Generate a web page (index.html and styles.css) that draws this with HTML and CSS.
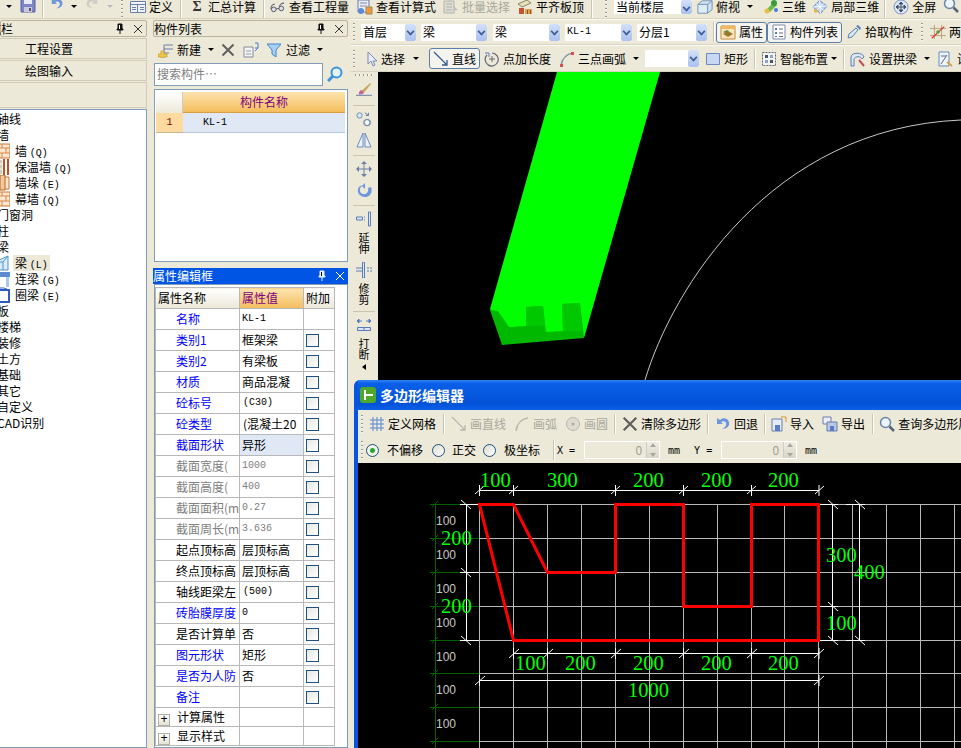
FILE: index.html
```html
<!DOCTYPE html>
<html lang="zh">
<head>
<meta charset="utf-8">
<title>多边形编辑器</title>
<link rel="stylesheet" href="styles.css">
</head>
<body>
<svg class="defs" width="0" height="0">
  <symbol id="i-save" viewBox="0 0 16 16"><path d="M1 1h14v14H1z" fill="#7f86c8" stroke="#5a5fa8"/><path d="M4 1h8v6H4z" fill="#e8ecf8"/><path d="M4 10h8v5H4z" fill="#c8c8d8"/><path d="M9 11h2v3H9z" fill="#556"/></symbol>
  <symbol id="i-undo" viewBox="0 0 16 16"><path d="M2 2v6h6L6 6c3-2 6 0 5 3-.6 2-2 3-4 4 5 0 8-3 7-7-1-4-6-5-9-2z" fill="#6f96dc"/></symbol>
  <symbol id="i-redo" viewBox="0 0 16 16"><path d="M14 2v6H8l2-2c-3-2-6 0-5 3 .6 2 2 3 4 4-5 0-8-3-7-7 1-4 6-5 9-2z" fill="#cfcfc8"/></symbol>
  <symbol id="i-def" viewBox="0 0 16 16"><path d="M.5 2.500h15v11H.5z" fill="#eef2fb" stroke="#6d7fa8"/><path d="M.5 5.500h15M7.500 5v8M10 8.500h4M10 10.500h4M2 8.500h4M2 10.500h4" stroke="#6d7fa8"/></symbol>
  <symbol id="i-glass" viewBox="0 0 17 16"><path d="M1 10c0-3 2-5 4-5M10 8c0-2 2-4 5-4" fill="none" stroke="#667" stroke-width="1.300"/><circle cx="4" cy="10.500" r="2.500" fill="#dde" stroke="#555"/><circle cx="12" cy="9.500" r="2.500" fill="#dde" stroke="#555"/><path d="M6.500 10l3-.5" stroke="#555"/></symbol>
  <symbol id="i-calc" viewBox="0 0 16 16"><path d="M1 1h11v12H1z" fill="#e8eef8" stroke="#6b7ea8"/><path d="M3 4h7M3 7h7" stroke="#88a"/><path d="M9 8h6v7H9z" fill="#e89a3c" stroke="#a85"/><circle cx="4" cy="12" r="3" fill="#5a8ad8"/></symbol>
  <symbol id="i-batch" viewBox="0 0 16 16"><path d="M1 2h10v12H1z" fill="#dcdcd4" stroke="#b4b4aa"/><path d="M3 5h6M3 8h6M3 11h6" stroke="#b4b4aa"/><path d="M10 6l5 5-3 .5L11 15z" fill="#c4c4bc"/></symbol>
  <symbol id="i-slab" viewBox="0 0 16 16"><path d="M1 5l9-4 4 3-9 4z" fill="#e8e0b8" stroke="#886"/><path d="M2 9h5v6H2z" fill="#c8502c"/><path d="M8 10h7v5H8z" fill="#e0a050"/><path d="M10 11h1v4h-1zM13 11h1v4h-1z" fill="#853"/></symbol>
  <symbol id="i-cube" viewBox="0 0 18 16"><path d="M1 5l5-4h11v10l-5 4H1z" fill="#cfe2f2" stroke="#6a8cb0"/><path d="M1 5h11v10M12 5l5-4" fill="none" stroke="#6a8cb0"/><path d="M2 6h9v8H2z" fill="#dcebf6"/></symbol>
  <symbol id="i-3d" viewBox="0 0 16 16"><path d="M4 10l7-7 3 3-7 7z" fill="#6cbc4c"/><circle cx="11" cy="4" r="3" fill="#3c9c3c"/><circle cx="4" cy="12" r="2.500" fill="#e8c040"/><circle cx="13" cy="11" r="2" fill="#4c7cd8"/></symbol>
  <symbol id="i-part" viewBox="0 0 17 16"><path d="M8 1l8 6-7 8-8-7z" fill="#b4ccf0" stroke="#6a8cc0"/><path d="M4.500 4.500l8 7M12 4l-7 7.500M8 1l1 14M1 8l15-1" stroke="#fff"/><circle cx="4" cy="12" r="2" fill="#e8b040"/></symbol>
  <symbol id="i-full" viewBox="0 0 16 16"><circle cx="8" cy="8" r="7" fill="#dbe6f6" stroke="#7c94c0"/><path d="M8 3v10M3 8h10M8 3l-2 2h4zM8 13l-2-2h4zM3 8l2-2v4zM13 8l-2-2v4z" fill="#345" stroke="#456"/></symbol>
  <symbol id="i-mag" viewBox="0 0 16 16"><circle cx="6.500" cy="6.500" r="5" fill="#eef4fc" stroke="#6b86a8" stroke-width="1.500"/><path d="M10.500 10.500L15 15" stroke="#567" stroke-width="2.500"/></symbol>
  <symbol id="i-prop" viewBox="0 0 16 16"><path d="M1 2h14v13H1z" fill="#fbe6c0" stroke="#c88c30"/><path d="M1 2h14v3H1z" fill="#f0b860"/><path d="M3 10l5-3 5 3-5 3z" fill="#9a7a28"/><path d="M3 8l4-2 2 1-4 2z" fill="#5e8a3c"/></symbol>
  <symbol id="i-list" viewBox="0 0 16 16"><path d="M2 1h12v14H2z" fill="#fff" stroke="#7c8cac"/><path d="M4 4h2v2H4zM4 8h2v2H4zM4 12h2v1H4z" fill="#4c7cd0"/><path d="M8 5h4M8 9h4M8 12.500h4" stroke="#667"/></symbol>
  <symbol id="i-pick" viewBox="0 0 16 16"><path d="M2 14l1-4 7-6 2 2-6 7z" fill="#d8e8f8" stroke="#5c7cb0"/><path d="M10 2l4 4 1-2-3-3z" fill="#5a7cc0"/></symbol>
  <symbol id="i-two" viewBox="0 0 18 16"><path d="M5 0v16M13 0v16M0 4h18M0 12h18" stroke="#b89c6c"/><path d="M2 15L16 2" stroke="#d83030" stroke-width="1.300"/><circle cx="9" cy="8" r="2" fill="#5aa03c"/></symbol>
  <symbol id="i-sel" viewBox="0 0 12 16"><path d="M2 1v12l3-3 2 5 2-1-2-4h4z" fill="#e8ecf8" stroke="#7c8cb0"/></symbol>
  <symbol id="i-line" viewBox="0 0 16 16"><path d="M1 1l13 13M9 14h5V9" fill="none" stroke="#345c94" stroke-width="1.300"/></symbol>
  <symbol id="i-len" viewBox="0 0 16 16"><path d="M3 4a6.500 6.500 0 1 0 5-2" fill="none" stroke="#667" stroke-width="1.200"/><path d="M5 8h6M8 5v6" stroke="#667"/><path d="M1 2h4v4" fill="none" stroke="#5a7cc0"/></symbol>
  <symbol id="i-arc" viewBox="0 0 16 16"><path d="M2 15C3 8 7 3 14 2" fill="none" stroke="#8c94a8" stroke-width="1.500"/><path d="M1 13h3v3H1zM12 1h3v3h-3z" fill="#d85050"/></symbol>
  <symbol id="i-rect" viewBox="0 0 16 16"><path d="M1.500 2.500h13v11h-13z" fill="#c8d8f2" stroke="#6a8cc0"/></symbol>
  <symbol id="i-smart" viewBox="0 0 16 16"><path d="M1.500 1.500h13v13h-13z" fill="#f4f4ee" stroke="#667" stroke-dasharray="2 1"/><path d="M4 4h3v3H4zM9 9h3v3H9z" fill="#456"/><path d="M9 4h3v3H9zM4 9h3v3H4z" fill="#8ca4cc"/></symbol>
  <symbol id="i-arch" viewBox="0 0 16 16"><path d="M1 6C1 1 13 1 14 6l-2 2c-1-3-7-3-8 0v7H1z" fill="#dfe8f6" stroke="#5c7ca8"/><path d="M9 9l5 6" stroke="#c05050" stroke-width="2"/></symbol>
  <symbol id="i-set" viewBox="0 0 16 16"><path d="M1 1h10v14H1z" fill="#eef4fc" stroke="#5c8cc8"/><path d="M3 13L9 4M3 5h5" stroke="#668"/><path d="M9 11l5 4" stroke="#d8a040" stroke-width="2"/></symbol>
  <symbol id="i-pin" viewBox="0 0 10 12"><path d="M3 1h4v5h1v1H2V6h1zM5 7v4" fill="#111" stroke="#111"/><path d="M4 2h1v4H4z" fill="#fff"/></symbol>
  <symbol id="i-close" viewBox="0 0 10 10"><path d="M1 1l8 8M9 1L1 9" stroke="currentColor" fill="none"/></symbol>
  <symbol id="i-new" viewBox="0 0 16 16"><path d="M6 3h9M6 7h9M6 11h5M6 3v8" stroke="#6a7ca8" fill="none"/><path d="M3 9h3v3h3v3H6v1H3v-1H0v-3h3z" fill="#f0c848" stroke="#b89030" stroke-width=".6"/></symbol>
  <symbol id="i-x" viewBox="0 0 14 14"><path d="M1.500 1.500l11 11M12.500 1.500l-11 11" stroke="#606060" stroke-width="2"/></symbol>
  <symbol id="i-copy" viewBox="0 0 16 16"><path d="M1 5h9v10H1z" fill="#f4f4f4" stroke="#889"/><path d="M3 9h5M3 12h5" stroke="#99a"/><path d="M12 1h3v5h-3M12 9l3-3" fill="none" stroke="#4c7cd0"/></symbol>
  <symbol id="i-filter" viewBox="0 0 14 14"><path d="M0 1h14L9 7v7L5 11V7z" fill="#a8d0f4" stroke="#3c86cc"/></symbol>
  <symbol id="i-search" viewBox="0 0 16 16"><circle cx="9.500" cy="6.500" r="5" fill="#e4f2fc" stroke="#3c94dc" stroke-width="2"/><path d="M6 10l-5 5" stroke="#3c94dc" stroke-width="3"/></symbol>
  <symbol id="i-wall" viewBox="0 0 16 16"><path d="M0 1h16v14H0z" fill="#fbe6d0" stroke="#c87838"/><path d="M0 5h16M0 10h16M8 1v4M4 5v5M12 5v5M8 10v5" stroke="#d88848"/></symbol>
  <symbol id="i-warm" viewBox="0 0 16 16"><path d="M0 1h8v14H0z" fill="#ddc8b8"/><path d="M0 5h8M0 10h8" stroke="#fff"/><path d="M9 0h2v16H9zM13 0h2v16h-2z" fill="#c05020"/></symbol>
  <symbol id="i-pier" viewBox="0 0 16 16"><path d="M1 2h14v12H1z" fill="#fbe6d0" stroke="#c87838"/><path d="M6 0h5v15H6z" fill="#f4c898" stroke="#b86828"/></symbol>
  <symbol id="i-beam" viewBox="0 0 16 16"><path d="M1 7l13-6v14H1z" fill="#d8ecfa" stroke="#4c94d0"/><path d="M1 7h8v8M9 7l5-6" fill="none" stroke="#4c94d0"/></symbol>
  <symbol id="i-link" viewBox="0 0 16 16"><path d="M0 1h16v5H0z" fill="#5c8cd0"/><path d="M3 6h3v10H3zM12 6h3v10h-3z" fill="#a8c8ec"/></symbol>
  <symbol id="i-ring" viewBox="0 0 16 16"><path d="M1 3h14v12H1z" fill="#fff" stroke="#2c5cc0" stroke-width="2"/><path d="M15 3l-5-2H0" fill="none" stroke="#2c5cc0"/></symbol>
  <symbol id="i-brush" viewBox="0 0 18 16"><path d="M0 14h18" stroke="#5a74a8"/><path d="M6 9L16 0l1 1-8 10z" fill="#c8a860"/><path d="M3 13c0-3 2-5 3-5l3 3c-1 2-3 2-6 2z" fill="#c06898"/></symbol>
  <symbol id="i-offset" viewBox="0 0 18 16"><circle cx="4" cy="4" r="3" fill="#dbe6f6" stroke="#6a84b0"/><circle cx="12" cy="12" r="3.500" fill="#fff" stroke="#6a84b0"/><circle cx="13" cy="12" r="3.500" fill="none" stroke="#6a84b0"/><path d="M10 1l4 3m0-3v3h-3" fill="none" stroke="#5a74a8"/></symbol>
  <symbol id="i-mirror" viewBox="0 0 16 16"><path d="M9 15V1l6 14zM7 15V1L1 15z" fill="#eef3fb" stroke="#6a8cc4"/></symbol>
  <symbol id="i-move" viewBox="0 0 16 16"><path d="M8 1v14M1 8h14" stroke="#6a7ea8"/><path d="M8 0l3 3H5zM8 16l3-3H5zM0 8l3-3v6zM16 8l-3-3v6z" fill="#6a7ea8"/></symbol>
  <symbol id="i-rot" viewBox="0 0 14 16"><path d="M8 1v6l-3-3C2 6 2 11 6 12c4 1 6-3 5-6l3-1c2 5-1 10-6 10C2 15-1 9 2 5c1-1 3-2 4-2z" fill="#6f96dc"/></symbol>
  <symbol id="i-ext" viewBox="0 0 16 16"><path d="M12.500 1v14h2V1zM.5 6h6v3h-6z" fill="#dce6f6" stroke="#5a7cb8"/><path d="M8 6h2M8 9h2" stroke="#5a7cb8" stroke-dasharray="1 1"/></symbol>
  <symbol id="i-trim" viewBox="0 0 16 16"><path d="M0 6h6M0 9h6" stroke="#5a7cb8"/><path d="M6.500 0h2v16h-2z" fill="#dce6f6" stroke="#5a7cb8"/><path d="M11 6h5M11 9h5" stroke="#5a7cb8" stroke-dasharray="2 1"/></symbol>
  <symbol id="i-break" viewBox="0 0 16 14"><path d="M1 3h5M10 3h5M1 3l2-2v4zM15 3l-2-2v4z" fill="#5a7cb8" stroke="#5a7cb8"/><path d="M1.500 9.500h13v3h-13zM8 9v4" fill="#dce6f6" stroke="#5a7cb8"/></symbol>
  <symbol id="i-app" viewBox="0 0 16 16"><path d="M0 3a3 3 0 0 1 3-3h10a3 3 0 0 1 3 3v10a3 3 0 0 1-3 3H3a3 3 0 0 1-3-3z" fill="#4ea82c"/><path d="M4 3h2v10H4zM6 7h7v2H6z" fill="#fff"/></symbol>
  <symbol id="i-grid" viewBox="0 0 16 16"><path d="M1 4h14M1 8h14M1 12h14M4 1v14M8 1v14M12 1v14" stroke="#5a84d0"/></symbol>
  <symbol id="i-gline" viewBox="0 0 16 16"><path d="M1 1l13 13M9 14h5V9" fill="none" stroke="#b8b8ae" stroke-width="1.300"/></symbol>
  <symbol id="i-garc" viewBox="0 0 16 16"><path d="M2 15C3 8 7 3 14 2" fill="none" stroke="#b8b8ae" stroke-width="1.500"/></symbol>
  <symbol id="i-gcirc" viewBox="0 0 16 16"><circle cx="8" cy="8" r="6.500" fill="#dedcd0" stroke="#b8b8ae"/><circle cx="8" cy="8" r="1.500" fill="#aaa"/></symbol>
  <symbol id="i-imp" viewBox="0 0 16 16"><path d="M1 3h10v12H1z" fill="#e4ecf8" stroke="#6a7ca8"/><path d="M4 9h5v6H4z" fill="#5a7cc8"/><path d="M10 1h5v5" fill="none" stroke="#d89030"/></symbol>
  <symbol id="i-exp" viewBox="0 0 16 16"><path d="M1 1h8v7H1z" fill="#eef" stroke="#6a7ca8"/><path d="M5 6h10v9H5z" fill="#b8c8e4" stroke="#6a7ca8"/><path d="M8 10h4v5H8z" fill="#5a7cc8"/></symbol>
</svg>

<div class="app">
  <header class="bar bar-top">
    <i class="caret"></i>
    <svg class="ic m8"><use href="#i-save"/></svg>
    <i class="sep m6"></i>
    <svg class="ic ic14 m6"><use href="#i-undo"/></svg>
    <i class="caret m7"></i>
    <svg class="ic ic14 m8"><use href="#i-redo"/></svg>
    <i class="caret faint m8"></i>
    <i class="grip m8"></i>
    <span class="tool m7"><svg class="ic"><use href="#i-def"/></svg>定义</span>
    <i class="sep m7"></i>
    <span class="tool m7"><b class="sigma">Σ</b>汇总计算</span>
    <i class="sep m7"></i>
    <span class="tool m5"><svg class="ic"><use href="#i-glass"/></svg>查看工程量</span>
    <span class="tool m8"><svg class="ic"><use href="#i-calc"/></svg>查看计算式</span>
    <span class="tool off m7"><svg class="ic"><use href="#i-batch"/></svg>批量选择</span>
    <span class="tool m7"><svg class="ic"><use href="#i-slab"/></svg>平齐板顶</span>
    <i class="sep m7"></i>
    <i class="grip m12"></i>
    <span class="combo w78 m7"><span class="combo-text">当前楼层</span><span class="combo-btn"></span></span>
    <span class="tool m5"><svg class="ic"><use href="#i-cube"/></svg>俯视</span>
    <i class="caret m7"></i>
    <span class="tool m10"><svg class="ic"><use href="#i-3d"/></svg>三维</span>
    <span class="tool m6"><svg class="ic"><use href="#i-part"/></svg>局部三维</span>
    <i class="sep m5"></i>
    <span class="tool m7"><svg class="ic"><use href="#i-full"/></svg>全屏</span>
    <svg class="ic m7"><use href="#i-mag"/></svg>
  </header>

  <div class="main">
    <aside class="nav">
      <div class="pane-title"><span class="pane-name clip-left">导航栏</span><svg class="pin"><use href="#i-pin"/></svg><svg class="close"><use href="#i-close"/></svg></div>
      <div class="nav-btn">工程设置</div>
      <div class="nav-btn">绘图输入</div>
      <div class="nav-btn tall"></div>
      <ul class="tree">
        <li>轴线</li>
        <li>墙</li>
        <li class="child"><svg class="ic"><use href="#i-wall"/></svg><span>墙 <em>(Q)</em></span></li>
        <li class="child"><svg class="ic"><use href="#i-warm"/></svg><span>保温墙 <em>(Q)</em></span></li>
        <li class="child"><svg class="ic"><use href="#i-pier"/></svg><span>墙垛 <em>(E)</em></span></li>
        <li class="child"><svg class="ic"><use href="#i-wall"/></svg><span>幕墙 <em>(Q)</em></span></li>
        <li>门窗洞</li>
        <li>柱</li>
        <li>梁</li>
        <li class="child"><svg class="ic"><use href="#i-beam"/></svg><span class="picked">梁 <em>(L)</em></span></li>
        <li class="child"><svg class="ic"><use href="#i-link"/></svg><span>连梁 <em>(G)</em></span></li>
        <li class="child"><svg class="ic"><use href="#i-ring"/></svg><span>圈梁 <em>(E)</em></span></li>
        <li>板</li>
        <li>楼梯</li>
        <li>装修</li>
        <li>土方</li>
        <li>基础</li>
        <li>其它</li>
        <li>自定义</li>
        <li>CAD识别</li>
      </ul>
    </aside>

    <section class="mid">
      <div class="list-pane">
        <div class="pane-title"><span class="pane-name">构件列表</span><svg class="pin"><use href="#i-pin"/></svg><svg class="close"><use href="#i-close"/></svg></div>
        <div class="list-tools">
          <span class="tool m5"><svg class="ic"><use href="#i-new"/></svg>新建</span>
          <i class="caret m7"></i>
          <svg class="ic ic14 m7"><use href="#i-x"/></svg>
          <svg class="ic m8"><use href="#i-copy"/></svg>
          <span class="tool m8"><svg class="ic ic14"><use href="#i-filter"/></svg><span class="m2">过滤</span></span>
          <i class="caret m7"></i>
        </div>
        <div class="search">
          <div class="search-box">搜索构件…</div>
          <svg class="ic"><use href="#i-search"/></svg>
        </div>
        <div class="list-table">
          <div class="lt-head"><span class="lt-corner"></span><span class="lt-col">构件名称</span></div>
          <div class="lt-row"><span class="lt-num">1</span><span class="lt-cell la">KL-1</span></div>
        </div>
      </div>

      <div class="prop-title"><span class="pane-name">属性编辑框</span><svg class="pin inv"><use href="#i-pin"/></svg><svg class="close"><use href="#i-close"/></svg></div>
      <div class="prop-wrap">
        <table class="props">
          <colgroup><col class="c1"><col class="c2"><col class="c3"></colgroup>
          <thead><tr><th>属性名称</th><th class="hot">属性值</th><th>附加</th></tr></thead>
          <tbody>
            <tr class="blue"><td class="k">名称</td><td class="la">KL-1</td><td></td></tr>
            <tr class="blue"><td class="k">类别1</td><td>框架梁</td><td><i class="chk"></i></td></tr>
            <tr class="blue"><td class="k">类别2</td><td>有梁板</td><td><i class="chk"></i></td></tr>
            <tr class="blue"><td class="k">材质</td><td>商品混凝</td><td><i class="chk"></i></td></tr>
            <tr class="blue"><td class="k">砼标号</td><td class="la pad">(C30)</td><td><i class="chk"></i></td></tr>
            <tr class="blue"><td class="k">砼类型</td><td class="pad">(混凝土20</td><td><i class="chk"></i></td></tr>
            <tr class="blue"><td class="k">截面形状</td><td class="cur">异形</td><td><i class="chk"></i></td></tr>
            <tr class="grey"><td class="k">截面宽度(</td><td class="la">1000</td><td><i class="chk"></i></td></tr>
            <tr class="grey"><td class="k">截面高度(</td><td class="la">400</td><td><i class="chk"></i></td></tr>
            <tr class="grey"><td class="k">截面面积(m</td><td class="la">0.27</td><td><i class="chk"></i></td></tr>
            <tr class="grey"><td class="k">截面周长(m</td><td class="la">3.636</td><td><i class="chk"></i></td></tr>
            <tr><td class="k">起点顶标高</td><td>层顶标高</td><td><i class="chk"></i></td></tr>
            <tr><td class="k">终点顶标高</td><td>层顶标高</td><td><i class="chk"></i></td></tr>
            <tr><td class="k">轴线距梁左</td><td class="la pad">(500)</td><td><i class="chk"></i></td></tr>
            <tr class="blue"><td class="k">砖胎膜厚度</td><td class="la">0</td><td><i class="chk"></i></td></tr>
            <tr><td class="k">是否计算单</td><td>否</td><td><i class="chk"></i></td></tr>
            <tr class="blue"><td class="k">图元形状</td><td>矩形</td><td><i class="chk"></i></td></tr>
            <tr class="blue"><td class="k">是否为人防</td><td>否</td><td><i class="chk"></i></td></tr>
            <tr class="blue"><td class="k">备注</td><td></td><td><i class="chk"></i></td></tr>
            <tr class="group"><td><span class="plus">+</span>计算属性</td><td></td><td></td></tr>
            <tr class="group"><td><span class="plus">+</span>显示样式</td><td></td><td></td></tr>
          </tbody>
        </table>
      </div>
    </section>

    <section class="work">
      <div class="bar bar-mid">
        <i class="grip m3"></i>
        <span class="combo w55 m6"><span class="combo-text">首层</span><span class="combo-btn"></span></span>
        <span class="combo w66 m5"><span class="combo-text">梁</span><span class="combo-btn"></span></span>
        <span class="combo w67 m6"><span class="combo-text">梁</span><span class="combo-btn"></span></span>
        <span class="combo w67 m5"><span class="combo-text la">KL-1</span><span class="combo-btn"></span></span>
        <span class="combo w70 m5"><span class="combo-text">分层1</span><span class="combo-btn"></span></span>
        <i class="sep m6"></i>
        <span class="tool toggled w51 m1"><svg class="ic"><use href="#i-prop"/></svg>属性</span>
        <span class="tool toggled w75"><svg class="ic"><use href="#i-list"/></svg>构件列表</span>
        <span class="tool m4"><svg class="ic"><use href="#i-pick"/></svg>拾取构件</span>
        <i class="grip m8"></i>
        <span class="tool m7"><svg class="ic"><use href="#i-two"/></svg>两点</span>
      </div>
      <div class="bar bar-low">
        <i class="grip m3"></i>
        <span class="tool m11"><svg class="ic ic12"><use href="#i-sel"/></svg>选择</span>
        <i class="caret m8"></i>
        <span class="tool toggled w51 m10"><svg class="ic"><use href="#i-line"/></svg>直线</span>
        <span class="tool m4"><svg class="ic"><use href="#i-len"/></svg>点加长度</span>
        <span class="tool m8"><svg class="ic"><use href="#i-arc"/></svg>三点画弧</span>
        <i class="caret m7"></i>
        <span class="combo w54 m6"><span class="combo-text"></span><span class="combo-btn"></span></span>
        <span class="tool m6"><svg class="ic"><use href="#i-rect"/></svg>矩形</span>
        <i class="sep m6"></i>
        <span class="tool m5"><svg class="ic"><use href="#i-smart"/></svg>智能布置</span>
        <i class="caret m3"></i>
        <i class="sep m6"></i>
        <span class="tool m5"><svg class="ic"><use href="#i-arch"/></svg>设置拱梁</span>
        <i class="caret m7"></i>
        <span class="tool m8"><svg class="ic"><use href="#i-set"/></svg>设置</span>
      </div>
      <div class="stage">
        <nav class="vbar">
          <i class="vgrip"></i>
          <svg class="vic"><use href="#i-brush"/></svg>
          <i class="vsep"></i>
          <svg class="vic"><use href="#i-offset"/></svg>
          <svg class="vic"><use href="#i-mirror"/></svg>
          <i class="vsep"></i>
          <svg class="vic"><use href="#i-move"/></svg>
          <svg class="vic"><use href="#i-rot"/></svg>
          <i class="vsep"></i>
          <svg class="vic"><use href="#i-ext"/></svg>
          <span class="vtext">延<br>伸</span>
          <svg class="vic"><use href="#i-trim"/></svg>
          <span class="vtext tight">修<br>剪</span>
          <i class="vsep"></i>
          <svg class="vic"><use href="#i-break"/></svg>
          <span class="vtext tight">打<br>断</span>
          <i class="vcaret"></i>
        </nav>
        <svg class="scene" viewBox="378 72 583 676">
          <path d="M645 380C672 290 770 128 961 120" fill="none" stroke="#c8c8c8"/>
          <path d="M557 72H660L584 338L510 335L490 309Z" fill="#00ff00"/>
          <path d="M490 310L498 311L509 327L526 326L526 307L543 306L546 332L563 331L562 304L580 303L584 338L513 344L502 345Z" fill="#00b800"/>
          <path d="M526 307L543 306L545 326L526 326ZM562 304L580 303L582 331L563 331Z" fill="#00c800"/>
        </svg>
      </div>
    </section>
  </div>

  <div class="dialog">
    <div class="dlg-title"><svg class="ic"><use href="#i-app"/></svg>多边形编辑器</div>
    <div class="bar dlg-tools">
      <i class="grip m3"></i>
      <span class="tool m6"><svg class="ic"><use href="#i-grid"/></svg>定义网格</span>
      <i class="sep m7"></i>
      <span class="tool off m6"><svg class="ic"><use href="#i-gline"/></svg>画直线</span>
      <span class="tool off m8"><svg class="ic"><use href="#i-garc"/></svg>画弧</span>
      <span class="tool off m8"><svg class="ic"><use href="#i-gcirc"/></svg>画圆</span>
      <i class="sep m6"></i>
      <span class="tool m6"><svg class="ic"><use href="#i-x"/></svg>清除多边形</span>
      <i class="sep m6"></i>
      <span class="tool m6"><svg class="ic"><use href="#i-undo"/></svg>回退</span>
      <i class="sep m6"></i>
      <span class="tool m5"><svg class="ic"><use href="#i-imp"/></svg>导入</span>
      <span class="tool m8"><svg class="ic"><use href="#i-exp"/></svg>导出</span>
      <i class="sep m7"></i>
      <span class="tool m5"><svg class="ic"><use href="#i-mag"/></svg>查询多边形属性</span>
    </div>
    <div class="bar dlg-opts">
      <i class="grip m3"></i>
      <i class="radio on m3"></i><span class="m8">不偏移</span>
      <i class="radio m9"></i><span class="m7">正交</span>
      <i class="radio m7"></i><span class="m8">极坐标</span>
      <i class="sep m13"></i>
      <span class="coord m2">X =</span>
      <span class="spin m9"><span class="spin-val">0</span><span class="spin-btn"></span></span>
      <span class="unit m8">mm</span>
      <span class="coord m14">Y =</span>
      <span class="spin m9"><span class="spin-val">0</span><span class="spin-btn"></span></span>
      <span class="unit m8">mm</span>
    </div>
    <svg class="cad" viewBox="358 463 603 285">
      <path class="gridline" d="M479 504.500H961M479 538.500H961M479 572.500H961M479 606.500H961M479 640.500H961M479 673.500H961M479 707.500H961M479 741.500H961M479.500 504V748M513.500 504V748M547.500 504V748M581.500 504V748M615.500 504V748M649.500 504V748M683.500 504V748M717.500 504V748M751.500 504V748M784.500 504V748M818.500 504V748M852.500 504V748M886.500 504V748M920.500 504V748M954.500 504V748"/>
      <path class="axis" d="M430 504.500H479M430 538.500H479M430 572.500H479M430 606.500H479M430 640.500H479M430 673.500H479M430 707.500H479M430 741.500H479M435.500 504V748M432 507l6-6M432 541l6-6M432 575l6-6M432 609l6-6M432 643l6-6M432 676l6-6M432 710l6-6M432 744l6-6"/>
      <g class="small">
        <text x="436" y="525">100</text><text x="436" y="559">100</text><text x="436" y="593">100</text><text x="436" y="627">100</text><text x="436" y="661">100</text><text x="436" y="694">100</text><text x="436" y="728">100</text>
      </g>
      <path class="dim" d="M479.500 490.500H819M479.500 485V496M513.500 485V496M615.500 485V496M683.500 485V496M751.500 485V496M819 485V496M475 494l9-8M509 494l9-8M611 494l9-8M679 494l9-8M747 494l9-8M815 494l9-8"/>
      <path class="dim" d="M466.500 504V640M460 504.500H479M460 572.500H479M460 640.500H479M461 500l10 9M461 568l10 9M461 636l10 9"/>
      <path class="dim" d="M832.500 504V640M859.500 504V640M820 504.500H838M846 504.500H865M820 606.500H838M820 640.500H838M846 640.500H865M828 500l10 9M855 500l10 9M828 602l10 9M828 636l10 9M855 636l10 9"/>
      <path class="dim" d="M513.500 653.500H819M513.500 648V659M547.500 648V659M615.500 648V659M683.500 648V659M751.500 648V659M819 648V659M509 658l10-9M543 658l10-9M611 658l10-9M679 658l10-9M747 658l10-9M814 658l10-9"/>
      <path class="dim" d="M479.500 680.500H819M479.500 675V686M819 675V686M475 685l10-9M814 685l10-9"/>
      <path class="poly" d="M479.500 504.500H513.500L547.500 572.500H615.500V504.500H683.500V606.500H751.500V504.500H818.500V640.500H513.500Z"/>
      <g class="big">
        <text x="480" y="487">100</text><text x="547" y="487">300</text><text x="633" y="487">200</text><text x="701" y="487">200</text><text x="768" y="487">200</text>
        <text x="441" y="545">200</text><text x="441" y="613">200</text>
        <text x="826" y="562">300</text><text x="854" y="579">400</text><text x="826" y="630">100</text>
        <text x="515" y="670">100</text><text x="565" y="670">200</text><text x="633" y="670">200</text><text x="701" y="670">200</text><text x="768" y="670">200</text>
        <text x="628" y="697">1000</text>
      </g>
    </svg>
  </div>
</div>
</body>
</html>
```
FILE: styles.css
```css
* { box-sizing: border-box; }
html, body { margin: 0; height: 100%; }
body { background: #ece9d8; overflow: hidden; font: 12px/16px "Noto Sans CJK SC", "Liberation Sans", sans-serif; color: #000; }
.defs { position: absolute; }
.app { position: relative; width: 961px; height: 748px; overflow: hidden; display: flex; flex-direction: column; }

.m1 { margin-left: 1px; } .m2 { margin-left: 2px; } .m3 { margin-left: 3px; } .m4 { margin-left: 4px; }
.m5 { margin-left: 5px; } .m6 { margin-left: 6px; } .m7 { margin-left: 7px; } .m8 { margin-left: 8px; }
.m9 { margin-left: 9px; } .m10 { margin-left: 10px; } .m11 { margin-left: 11px; } .m12 { margin-left: 12px; }
.m13 { margin-left: 13px; } .m14 { margin-left: 14px; }

.bar { display: flex; align-items: center; flex: none; background: #ece9d8; white-space: nowrap; }
.bar-top { height: 19px; padding-left: 6px; align-items: flex-start; border-bottom: 1px solid #d8d4c0; }
.bar-top .caret { margin-top: 5px; }
.bar-top .ic { margin-top: -3px; }
.bar-top .tool { line-height: 13px; height: 13px; }
.bar-top .tool .ic { margin-top: 0; }
.bar-top .combo { height: 14px; }
.bar-top .combo-text { line-height: 13px; }
.bar-top .sep { height: 18px; }
.bar-mid { height: 26px; border-top: 1px solid #fbfaf4; border-bottom: 1px solid #d8d4c0; }
.bar-low { height: 27px; border-top: 1px solid #fbfaf4; border-bottom: 1px solid #d8d4c0; }

.ic { width: 16px; height: 16px; flex: none; display: block; }
.ic14 { width: 14px; height: 14px; }
.ic12 { width: 12px; }
.tool { display: inline-flex; align-items: center; gap: 3px; flex: none; height: 18px; }
.off { color: #a8a89c; }
.sigma { width: 16px; text-align: center; font: 700 14px/14px "Liberation Serif", serif; color: #333; }
.sep { flex: none; width: 2px; height: 20px; border-left: 1px solid #c8c4b0; border-right: 1px solid #fff; }
.grip { flex: none; width: 2px; height: 18px; background: repeating-linear-gradient(#9a9888 0 1px, #f8f8f0 1px 2px, transparent 2px 4px); }
.caret { flex: none; width: 0; height: 0; border: 3px solid transparent; border-top: 3px solid #000; border-bottom: 0; }
.caret.faint { border-top-color: #bbb; }
.toggled { height: 21px; padding-left: 3px; background: #f4f3ee; border: 1px solid #5b7fa8; border-radius: 3px; }
.w51 { width: 51px; } .w75 { width: 75px; }

.combo { display: flex; flex: none; height: 17px; background: #fff; }
.w54 { width: 54px; } .w55 { width: 55px; } .w66 { width: 66px; } .w67 { width: 67px; } .w70 { width: 70px; } .w78 { width: 78px; }
.combo-text { flex: 1; padding-left: 2px; line-height: 15px; }
.combo-btn { position: relative; width: 11px; background: linear-gradient(#d4e0f8, #aac0ee); border-radius: 2px; }
.combo-btn::after { content: ""; position: absolute; left: 2px; top: 4px; width: 5px; height: 5px; border: solid #3c5c94; border-width: 0 2px 2px 0; transform: rotate(45deg) scale(.8); }
.la { font-family: "Liberation Mono", monospace; font-size: 10px; }

.main { flex: 1; display: flex; min-height: 0; }

.nav { width: 147px; margin-right: 6px; flex: none; display: flex; flex-direction: column; }
.pane-title { position: relative; display: flex; align-items: center; height: 17px; margin-top: 1px; background: #ece9d8; border: 1px solid #b8b4a0; border-radius: 2px; flex: none; }
.pane-name { white-space: nowrap; }
.clip-left { margin-left: -24px; }
.pin { width: 10px; height: 12px; position: absolute; right: 21px; top: 2px; }
.close { width: 10px; height: 10px; position: absolute; right: 3px; top: 3px; color: #333; }
.nav-btn { height: 21px; margin-top: 1px; padding-left: 25px; line-height: 20px; background: #ece9d8; border: 1px solid #cfcbb8; border-left: 0; flex: none; }
.nav-btn.tall { height: 26px; }
.tree { list-style: none; margin: 1px 0 0; padding: 1px 0 0 0; flex: 1; background: #fff; border: 1px solid #7f9db9; border-left: 0; overflow: hidden; }
.tree li { display: flex; align-items: center; height: 16px; margin-left: -3px; white-space: nowrap; line-height: 16px; }
.tree li.child { margin-left: -6px; }
.tree li.child .ic { margin-right: 5px; }
.tree em { font: 10px "Liberation Mono", monospace; }
.picked { width: 37px; padding-left: 2px; margin-left: -2px; background: #ece9d8; }

.mid { width: 195px; flex: none; display: flex; flex-direction: column; margin-right: 2px; }
.list-pane { height: 243px; flex: none; display: flex; flex-direction: column; }
.list-tools { display: flex; align-items: center; height: 25px; flex: none; }
.search { display: flex; align-items: center; gap: 4px; height: 24px; padding-left: 1px; flex: none; }
.search-box { width: 169px; height: 23px; padding-left: 2px; line-height: 20px; background: #fff; border: 1px solid #7f9db9; color: #808080; font-size: 12px; }
.list-table { flex: 1; margin: 3px 0 0 1px; padding: 2px 1px 0; background: #fff; border: 1px solid #7f9db9; }
.lt-head, .lt-row { display: flex; }
.lt-head { height: 21px; }
.lt-corner { width: 27px; background: linear-gradient(#fff, #ece9d8); border-right: 1px solid #ccc; }
.lt-col { width: 162px; text-align: center; line-height: 20px; color: #800080; background: linear-gradient(#fde4b0, #f4bd5c); border-bottom: 1px solid #d8a040; }
.lt-row { height: 20px; }
.lt-num { width: 27px; text-align: center; color: #800000; background: #fddba0; border-bottom: 1px solid #c8b890; font: 10px/19px "Liberation Mono", monospace; }
.lt-cell { width: 162px; padding-left: 20px; line-height: 19px; background: #dfe8f4; border-bottom: 1px solid #b8c8dc; }

.prop-title { position: relative; display: flex; align-items: center; height: 16px; margin-top: 6px; background: #0055e5; color: #fff; flex: none; }
.prop-title .close { color: #fff; right: 3px; top: 3px; }
.pin.inv { filter: invert(1); }
.prop-wrap { flex: 1; min-height: 0; margin-left: 1px; padding: 2px 0 0 0; background: #fff; border: 1px solid #7f9db9; overflow: hidden; }
.props { width: 179px; table-layout: fixed; border-collapse: collapse; }
.c1 { width: 84px; } .c2 { width: 64px; } .c3 { width: 31px; }
.props th { height: 21px; padding: 0 0 0 2px; font-weight: 400; text-align: left; background: linear-gradient(#fff, #ece9d8); border: 1px solid #b8b8b8; white-space: nowrap; }
.props th.hot { color: #800080; background: linear-gradient(#fde4b0, #f4bd5c); }
.props td { height: 21px; padding: 0 0 0 2px; border: 1px solid #b8b8b8; white-space: nowrap; overflow: hidden; line-height: 16px; }
.props td.k { padding-left: 20px; }
.props td.pad { padding-left: 3px; }
.props td.cur { background: #dfe8f4; }
.props tr.blue .k { color: #0000ff; }
.props tr.grey .k, .props tr.grey td { color: #808080; }
.props tr.group td { height: 19px; }
.plus { display: inline-block; width: 12px; height: 12px; margin-right: 7px; vertical-align: -1px; line-height: 10px; text-align: center; background: linear-gradient(#fff, #e4e2d6); border: 1px solid #b0b0a4; font-size: 12px; font-family: "Liberation Mono", monospace; }
.chk { display: block; width: 13px; height: 13px; background: linear-gradient(135deg, #e8e8e0, #fff); border: 1px solid #1c5180; }

.work { flex: 1; min-width: 0; display: flex; flex-direction: column; }
.stage { flex: 1; min-height: 0; display: flex; }
.vbar { width: 28px; flex: none; display: flex; flex-direction: column; align-items: center; padding-top: 2px; background: #ece9d8; }
.vgrip { width: 18px; height: 2px; margin-bottom: 6px; flex: none; background: repeating-linear-gradient(90deg, #9a9888 0 1px, #f8f8f0 1px 2px, transparent 2px 4px); }
.vic { width: 16px; height: 16px; margin-bottom: 5px; flex: none; display: block; }
.vsep { width: 22px; height: 1px; margin: 2px 0 5px; flex: none; background: #c8c4b0; }
.vtext { width: 12px; flex: none; line-height: 11px; font-size: 11px; text-align: center; margin: 0 0 8px; }
.vtext.tight { margin-bottom: 4px; }
.vcaret { width: 0; height: 0; flex: none; border: 3px solid transparent; border-right: 4px solid #000; border-left: 0; }
.scene { flex: 1; min-width: 0; height: 676px; background: #000; display: block; }

.dialog { position: absolute; left: 354px; top: 380px; width: 640px; height: 380px; display: flex; flex-direction: column; background: #0855dd; border-left: 4px solid #0855dd; border-radius: 6px 0 0 0; }
.dlg-title { display: flex; align-items: center; gap: 4px; height: 30px; padding-left: 2px; flex: none; color: #fff; font-size: 14px; font-weight: 700; background: linear-gradient(#2f83f5 0, #0a5fe8 12%, #0352d8 80%, #0a60e8 100%); }
.dlg-tools { height: 27px; }
.dlg-opts { height: 26px; }
.coord { width: 18px; font: 10px "DejaVu Sans Mono", monospace; }
.unit { font: 10px "DejaVu Sans Mono", monospace; }
.spin { display: flex; width: 76px; height: 18px; border: 1px solid #fff; color: #a0a090; }
.spin-val { flex: 1; text-align: right; padding-right: 4px; line-height: 15px; }
.spin-btn { position: relative; width: 13px; background: linear-gradient(#f0eee4, #d8d6c8); border-left: 1px solid #ccc; }
.spin-btn::before, .spin-btn::after { content: ""; position: absolute; left: 3px; border: 3px solid transparent; }
.spin-btn::before { top: 1px; border-top: 0; border-bottom: 4px solid #aaa89c; }
.spin-btn::after { bottom: 1px; border-bottom: 0; border-top: 4px solid #aaa89c; }
.radio { flex: none; width: 13px; height: 13px; border: 1px solid #1c5180; border-radius: 50%; background: linear-gradient(135deg, #dcdcd0, #fff); }
.radio.on { background: radial-gradient(circle, #22aa33 0 2px, #f2f2ea 3px); }

.cad { display: block; width: 603px; height: 285px; flex: none; background: #000; }
.gridline { stroke: #b8b8b8; fill: none; }
.axis { stroke: #006400; fill: none; }
.dim { stroke: #fff; fill: none; }
.poly { stroke: #ff0000; stroke-width: 3; fill: none; stroke-linejoin: miter; }
.small text { fill: #c8c8c8; font: 12px "Liberation Sans", sans-serif; }
.big text { fill: #00ff00; font: 20.500px "Liberation Serif", serif; }
```
